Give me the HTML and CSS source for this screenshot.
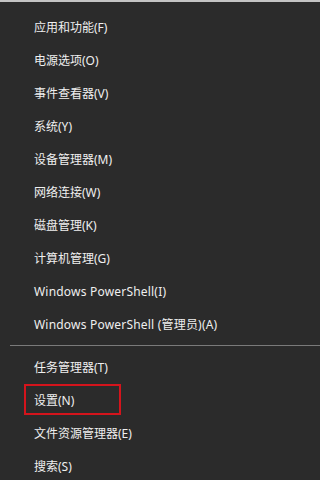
FILE: index.html
```
<!DOCTYPE html>
<html lang="zh-CN">
<head>
<meta charset="utf-8">
<link rel="stylesheet" href="styles.css">
</head>
<body>
<div class="menu">
  <ul class="group group-top">
    <li class="item">应用和功能(F)</li>
    <li class="item">电源选项(O)</li>
    <li class="item">事件查看器(V)</li>
    <li class="item">系统(Y)</li>
    <li class="item">设备管理器(M)</li>
    <li class="item">网络连接(W)</li>
    <li class="item">磁盘管理(K)</li>
    <li class="item">计算机管理(G)</li>
    <li class="item item-latin">Windows PowerShell(I)</li>
    <li class="item item-latin">Windows PowerShell (管理员)(A)</li>
  </ul>
  <div class="separator"></div>
  <ul class="group">
    <li class="item">任务管理器(T)</li>
    <li class="item"><span class="highlight-box">设置(N)</span></li>
    <li class="item">文件资源管理器(E)</li>
    <li class="item">搜索(S)</li>
  </ul>
</div>
</body>
</html>
```
FILE: styles.css
```
html, body {
  margin: 0;
  padding: 0;
  background: #2b2b2b;
  height: 480px;
  overflow: hidden;
}
.menu {
  border-top: 2px solid #c4c4c4;
  background: #2b2b2b;
  padding-top: 9px;
  font-family: "Noto Sans", "Noto Sans CJK SC", sans-serif;
  font-size: 12px;
  color: #efefef;
}
.group {
  list-style: none;
  margin: 0;
  padding: 0;
}
.item {
  height: 33px;
  line-height: 33px;
  padding-left: 34px;
  white-space: nowrap;
}
.item-latin {
  letter-spacing: 0.2px;
}
.separator {
  height: 1px;
  background: #7a7a7a;
  margin: 4px 0 5px 10px;
}
.highlight-box {
  position: relative;
}
.highlight-box::after {
  content: "";
  position: absolute;
  left: -10px;
  top: -8px;
  width: 93px;
  height: 27px;
  border: 2px solid #d4141c;
}
```
